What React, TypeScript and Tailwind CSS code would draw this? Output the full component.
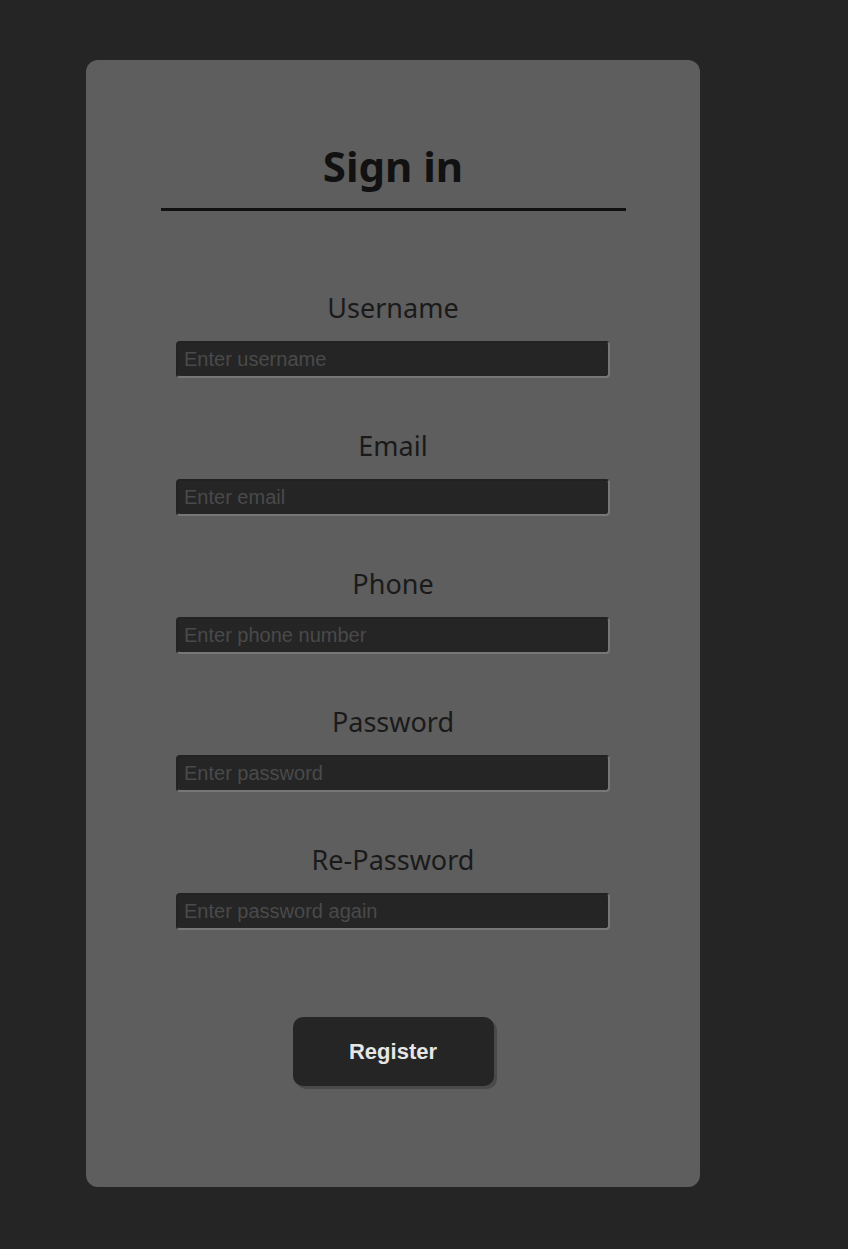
import React from "react";

const fields = [
  { label: "Username", placeholder: "Enter username", type: "text" },
  { label: "Email", placeholder: "Enter email", type: "email" },
  { label: "Phone", placeholder: "Enter phone number", type: "tel" },
  { label: "Password", placeholder: "Enter password", type: "password" },
  { label: "Re-Password", placeholder: "Enter password again", type: "password" },
];

export default function App() {
  return (
    <div className="min-h-screen w-full bg-[#252525] pt-[60px] pl-[86px] pb-[62px]">
      <div className="w-[614px] h-[1127px] rounded-[12px] bg-[#5e5e5e] flex flex-col items-center">
        <h1 className="mt-[82px] text-[42px] leading-[48px] font-bold text-[#111111] [font-family:'Noto_Sans',sans-serif]">
          Sign in
        </h1>
        <div className="mt-[18px] w-[465px] h-[3px] bg-[#111111]" />
        <form className="mt-[79px] flex flex-col items-center gap-[50px]" onSubmit={(e) => e.preventDefault()}>
          {fields.map((f) => (
            <div key={f.label} className="flex flex-col items-center">
              <label className="text-[27px] leading-[36px] text-[#1a1a1a] [font-family:'Noto_Sans',sans-serif]">
                {f.label}
              </label>
              <input
                type={f.type}
                placeholder={f.placeholder}
                className="mt-[15px] w-[434px] h-[37px] rounded-[4px] bg-[#252525] border-2 border-t-[#222222] border-l-[#222222] border-r-[#777777] border-b-[#777777] px-[6px] text-[20px] text-[#cfcfcf] placeholder:text-[#4a4a4a] outline-none [font-family:'Liberation_Sans',Arial,sans-serif]"
              />
            </div>
          ))}
          <button
            type="submit"
            className="mt-[37px] w-[201px] h-[69px] rounded-[10px] bg-[#252525] shadow-[3px_3px_0_#4a4a4a] text-[22px] font-bold text-[#e6e6e6] [font-family:'Liberation_Sans',Arial,sans-serif]"
          >
            Register
          </button>
        </form>
      </div>
    </div>
  );
}
